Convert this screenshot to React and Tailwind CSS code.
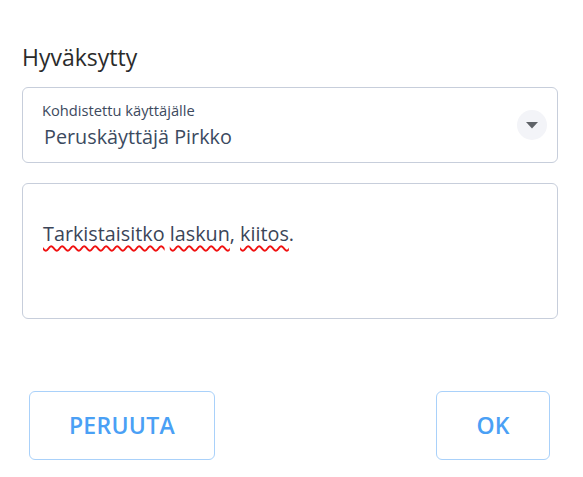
const App = () => {
  const font = { fontFamily: '"Open Sans", "Noto Sans", sans-serif' };
  const wavy = "underline decoration-wavy decoration-[#f01010] decoration-[1.5px] underline-offset-[4px]";

  return (
    <div className="min-h-screen w-full bg-white px-[22px] pt-[40px] text-[#333]" style={font}>
      <h2 className="text-[23px] leading-[34px] text-[#2b2b2b]">Hyväksytty</h2>

      <div className="mt-[13px] flex h-[76px] w-[536px] items-center justify-between rounded-[6px] border border-[#c7cedb] pl-[19px] pr-[10px]">
        <div className="flex flex-col">
          <span className="text-[14.7px] leading-[18px] text-[#3d4a5e]">Kohdistettu käyttäjälle</span>
          <span className="mt-[5px] pl-[2px] text-[19.8px] leading-[26px] text-[#3b4a60]">Peruskäyttäjä Pirkko</span>
        </div>
        <div className="flex h-[30px] w-[30px] items-center justify-center rounded-full bg-[#f3f4f8]">
          <svg width="12" height="7" viewBox="0 0 12 7">
            <path d="M0 0 L12 0 L6 6.5 Z" fill="#5f6368" />
          </svg>
        </div>
      </div>

      <div className="mt-[20px] h-[136px] w-[536px] rounded-[6px] border border-[#c7cedb] px-[20px] pt-[35px]">
        <p className="text-[19.8px] leading-[30px] text-[#3b4558]">
          <span className={wavy}>Tarkistaisitko</span> <span className={wavy}>laskun</span>, <span className={wavy}>kiitos</span>.
        </p>
      </div>

      <div className="mt-[72px] flex justify-between pl-[7px] pr-[11px]">
        <button type="button" className="flex h-[69px] w-[186px] items-center justify-center rounded-[6px] border border-[#a9d1fa] text-[23px] font-semibold tracking-[0.3px] text-[#4aa0f5]">
          PERUUTA
        </button>
        <button type="button" className="flex h-[69px] w-[114px] items-center justify-center rounded-[6px] border border-[#a9d1fa] text-[23px] font-semibold text-[#4aa0f5]">
          OK
        </button>
      </div>
    </div>
  );
};

export default App;
